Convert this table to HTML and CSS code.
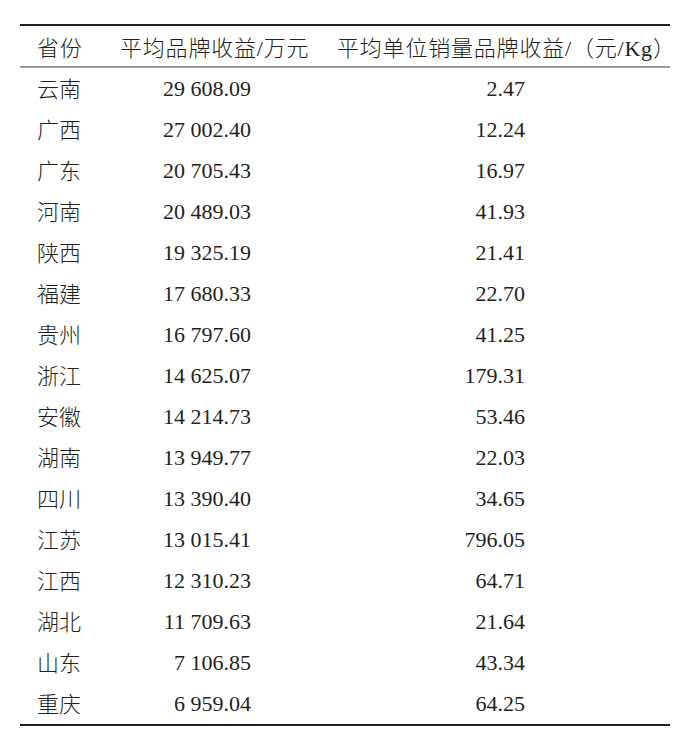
FILE: index.html
```html
<!DOCTYPE html>
<html lang="zh-CN">
<head>
<meta charset="utf-8">
<title>各省平均品牌收益</title>
<link rel="stylesheet" href="styles.css">
</head>
<body>
<div class="table">
  <div class="row head">
    <div class="c1">省份</div>
    <div class="c2">平均品牌收益/万元</div>
    <div class="c3">平均单位销量品牌收益/（元/Kg）</div>
  </div>
  <div class="body">
    <div class="row"><div class="c1">云南</div><div class="c2">29 608.09</div><div class="c3">2.47</div></div>
    <div class="row"><div class="c1">广西</div><div class="c2">27 002.40</div><div class="c3">12.24</div></div>
    <div class="row"><div class="c1">广东</div><div class="c2">20 705.43</div><div class="c3">16.97</div></div>
    <div class="row"><div class="c1">河南</div><div class="c2">20 489.03</div><div class="c3">41.93</div></div>
    <div class="row"><div class="c1">陕西</div><div class="c2">19 325.19</div><div class="c3">21.41</div></div>
    <div class="row"><div class="c1">福建</div><div class="c2">17 680.33</div><div class="c3">22.70</div></div>
    <div class="row"><div class="c1">贵州</div><div class="c2">16 797.60</div><div class="c3">41.25</div></div>
    <div class="row"><div class="c1">浙江</div><div class="c2">14 625.07</div><div class="c3">179.31</div></div>
    <div class="row"><div class="c1">安徽</div><div class="c2">14 214.73</div><div class="c3">53.46</div></div>
    <div class="row"><div class="c1">湖南</div><div class="c2">13 949.77</div><div class="c3">22.03</div></div>
    <div class="row"><div class="c1">四川</div><div class="c2">13 390.40</div><div class="c3">34.65</div></div>
    <div class="row"><div class="c1">江苏</div><div class="c2">13 015.41</div><div class="c3">796.05</div></div>
    <div class="row"><div class="c1">江西</div><div class="c2">12 310.23</div><div class="c3">64.71</div></div>
    <div class="row"><div class="c1">湖北</div><div class="c2">11 709.63</div><div class="c3">21.64</div></div>
    <div class="row"><div class="c1">山东</div><div class="c2">7 106.85</div><div class="c3">43.34</div></div>
    <div class="row"><div class="c1">重庆</div><div class="c2">6 959.04</div><div class="c3">64.25</div></div>
  </div>
</div>
</body>
</html>
```

FILE: styles.css
```css
html, body {
  margin: 0;
  padding: 0;
  background: #ffffff;
}

body {
  font-family: "Liberation Serif", "Noto Sans CJK SC", serif;
  font-size: 22px;
  font-weight: 300;
  color: #231f20;
}

.table {
  margin: 24px 0 0 20px;
  width: 650px;
  border-top: 2px solid #231f20;
  border-bottom: 2px solid #231f20;
}

.row {
  display: grid;
  grid-template-columns: 100px 210px 340px;
  align-items: center;
  height: 41px;
  white-space: nowrap;
}

.head {
  height: 40px;
  border-bottom: 2px solid #9a9a9a;
  letter-spacing: 0.8px;
}

.c1 {
  padding-left: 17px;
}

.body .c1 {
  padding-bottom: 4px;
}

.body .c2 {
  text-align: right;
  padding-right: 79px;
}

.body .c3 {
  text-align: right;
  padding-right: 145px;
}

.head .c3 {
  padding-left: 7px;
}
```
